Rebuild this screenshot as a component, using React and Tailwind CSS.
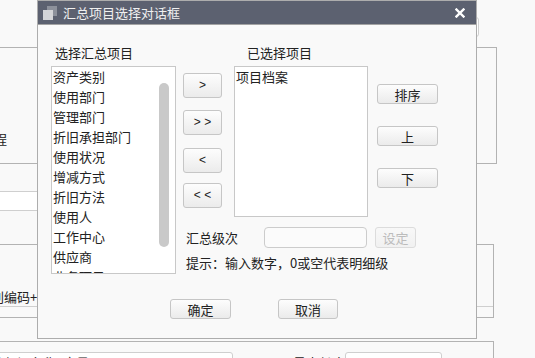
import React from 'react'

const items = ['资产类别', '使用部门', '管理部门', '折旧承担部门', '使用状况', '增减方式', '折旧方法', '使用人', '工作中心', '供应商', '业务项目'];

// plain gray gradient button
const Btn = ({ children, className = '', disabled = false }) => (
  <div
    className={`flex items-center justify-center border rounded-[3px] bg-gradient-to-b ${
      disabled
        ? 'border-[#dcdcdc] from-[#f8f8f8] to-[#f1f1f1] text-[#bcbcbc]'
        : 'border-[#c6c6c6] from-[#fdfdfd] to-[#ebebeb] text-[#222]'
    } ${className}`}
  >
    {children}
  </div>
);

const App = () => {
  return (
    <div className="relative w-[535px] h-[358px] overflow-hidden bg-[#f9f9f9] text-[13px] leading-[17px] text-[#222] font-['Noto_Sans_CJK_SC','Microsoft_YaHei',sans-serif]">
      {/* page behind the dialog */}
      <div className="flex flex-col">
        <div className="h-[47px] flex justify-end pr-[56px]">
          <div className="mt-[17px] w-[120px] h-[20px] border border-[#cfcfcf] rounded-[3px] bg-white"></div>
        </div>
        <div className="-ml-px w-[498px] h-[117px] border border-[#b3b3b3]">
          <div className="mt-[82px] ml-[-19px]">工程</div>
        </div>
        <div className="h-[80px]">
          <div className="-ml-px mt-[27px] w-[320px] h-[20px] border border-[#cfcfcf] bg-white"></div>
        </div>
        <div className="-ml-px w-[495px] h-[74px] border border-[#b3b3b3]">
          <div className="pt-[43px] border-b border-[#cfcfcf] h-[62px] ml-[-9px]">别编码+</div>
        </div>
        <div className="h-[23px]"></div>
        <div className="-ml-px w-[495px] h-[40px] border border-[#b3b3b3] flex items-start pt-[10px]">
          <div className="ml-[-20px] w-[253px] h-[22px] border border-[#cfcfcf] rounded-[3px] bg-white pl-[10px] pt-[1px]">编部门名称_变量</div>
          <div className="w-[112px] text-right pt-[2px]">最大长度</div>
          <div className="w-[97px] h-[22px] border border-[#cfcfcf] rounded-[3px] bg-white pl-[5px] pt-[1px]">1</div>
        </div>
      </div>

      {/* dialog */}
      <div className="absolute left-[37px] top-0 w-[440px] h-[339px] border border-[#adadad] bg-[#f9f9f9] flex flex-col">
        <div className="h-[24px] bg-[#5c6170] border-b border-[#a3a3a3] flex items-center pl-[5px] pr-[11px] shrink-0">
          <svg width="14" height="14" viewBox="0 0 14 14">
            <rect x="4" y="0" width="10" height="10" fill="#8d919b" />
            <rect x="0" y="4" width="10" height="10" fill="#d4d5d8" />
          </svg>
          <span className="ml-[6px] text-[#f0f0f0]">汇总项目选择对话框</span>
          <svg className="ml-auto" width="10" height="10" viewBox="0 0 10 10">
            <path d="M1.5 1.5 L8.5 8.5 M8.5 1.5 L1.5 8.5" stroke="#ffffff" strokeWidth="2.4" strokeLinecap="square" />
          </svg>
        </div>

        <div className="flex pl-[13px] pt-[19px]">
          {/* left column */}
          <div className="w-[125px] flex flex-col">
            <div className="h-[22px] pl-[4px]">选择汇总项目</div>
            <div className="h-[208px] border border-[#c8c8c8] bg-white flex overflow-hidden">
              <div className="flex-1 pl-[1px] overflow-hidden">
                {items.map((it) => (
                  <div key={it} className="h-[20px] leading-[20px] whitespace-nowrap">{it}</div>
                ))}
              </div>
              <div className="w-[17px] pt-[16px] pl-[1px]">
                <div className="w-[10px] h-[164px] rounded-full bg-[#c9c9c9]"></div>
              </div>
            </div>
          </div>

          {/* right part */}
          <div className="ml-[7px] flex flex-col">
            <div className="flex items-start">
              <div className="w-[39px] mt-[29px] flex flex-col font-['Liberation_Sans',sans-serif] text-[12px]">
                <Btn className="h-[25px]">&gt;</Btn>
                <Btn className="h-[25px] mt-[12px]">&gt; &gt;</Btn>
                <Btn className="h-[25px] mt-[13px]">&lt;</Btn>
                <Btn className="h-[25px] mt-[10px]">&lt; &lt;</Btn>
              </div>
              <div className="ml-[12px] flex flex-col">
                <div className="h-[22px] pl-[13px]">已选择项目</div>
                <div className="w-[134px] h-[151px] border border-[#c8c8c8] bg-white pl-[1px]">
                  <div className="h-[20px] leading-[20px]">项目档案</div>
                </div>
              </div>
              <div className="ml-[9px] mt-[40px] flex flex-col">
                <Btn className="w-[61px] h-[20px]">排序</Btn>
                <Btn className="w-[61px] h-[20px] mt-[22px]">上</Btn>
                <Btn className="w-[61px] h-[20px] mt-[22px]">下</Btn>
              </div>
            </div>

            <div className="mt-[10px] flex items-center h-[21px]">
              <div className="w-[81px] pl-[3px]">汇总级次</div>
              <div className="w-[103px] h-[21px] border border-[#cccccc] rounded-[4px] bg-[#fbfbfb]"></div>
              <Btn disabled className="ml-[8px] w-[41px] h-[21px]">设定</Btn>
            </div>
            <div className="mt-[6px] pl-[3px] whitespace-nowrap">提示：输入数字，0或空代表明细级</div>
          </div>
        </div>

        <div className="mt-[25px] pl-[132px] flex">
          <Btn className="w-[61px] h-[20px]">确定</Btn>
          <Btn className="ml-[47px] w-[60px] h-[20px]">取消</Btn>
        </div>
      </div>
    </div>
  );
};

export default App;
